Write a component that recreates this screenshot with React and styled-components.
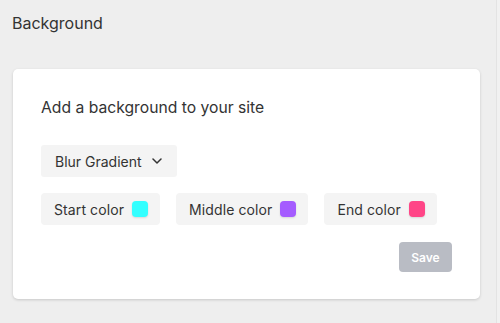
import React from 'react'
import styled, { createGlobalStyle } from 'styled-components'

const GlobalStyle = createGlobalStyle`
  html, body {
    margin: 0;
    padding: 0;
    background: #eeeeee;
    font-family: Inter, 'Liberation Sans', sans-serif;
    color: #333333;
  }
`

const Page = styled.div`
  display: flex;
  width: 500px;
  height: 323px;
  overflow: hidden;
`

const Main = styled.div`
  flex: 1;
  padding: 11px 16px 0 12px;
`

const ScrollTrack = styled.div`
  width: 3px;
  background: #f1f1f1;
  border-left: 1px solid #e3e3e3;
`

const Title = styled.h2`
  margin: 0;
  font-size: 16px;
  line-height: 24px;
  font-weight: 400;
  color: #333333;
`

const Card = styled.div`
  margin: 34px 0 0 1px;
  width: 467px;
  box-sizing: border-box;
  background: #ffffff;
  border-radius: 5px;
  box-shadow: 0 1px 3px rgba(0, 0, 0, 0.16);
  padding: 27px 28px 27px 28px;
  display: flex;
  flex-direction: column;
`

const Heading = styled.p`
  margin: 0;
  font-size: 15.7px;
  line-height: 24px;
  color: #333333;
`

const Select = styled.button`
  margin-top: 25px;
  align-self: flex-start;
  height: 32px;
  padding: 0 15px 0 14px;
  display: flex;
  align-items: center;
  gap: 10px;
  border: none;
  border-radius: 3px;
  background: #f4f4f4;
  font-family: inherit;
  font-size: 14px;
  color: #333333;
`

const ColorRow = styled.div`
  margin-top: 16px;
  display: flex;
  gap: 16px;
`

const Chip = styled.div`
  height: 32px;
  display: flex;
  align-items: center;
  gap: 8px;
  padding: 0 12px 0 13px;
  border-radius: 4px;
  background: #f4f4f4;
  font-size: 14px;
  letter-spacing: 0.1px;
  color: #333333;
`

const Swatch = styled.span`
  width: 16px;
  height: 16px;
  border-radius: 4px;
  background: ${p => p.color};
  box-shadow: 0 1px 2px rgba(0, 0, 0, 0.12);
`

const Footer = styled.div`
  margin-top: 17px;
  display: flex;
  justify-content: flex-end;
`

const SaveButton = styled.button`
  height: 30px;
  width: 53px;
  border: none;
  border-radius: 4px;
  background: #b9bcc4;
  color: #ffffff;
  font-family: inherit;
  font-size: 12px;
  font-weight: 600;
`

const Chevron = () => (
  <svg width="10" height="6" viewBox="0 0 10 6" fill="none">
    <path d="M1 1l4 4 4-4" stroke="#333" strokeWidth="1.5" strokeLinecap="round" strokeLinejoin="round" />
  </svg>
)

const colors = [
  { label: 'Start color', value: '#33ffff' },
  { label: 'Middle color', value: '#a55cff' },
  { label: 'End color', value: '#ff4587' },
]

const App = () => (
  <>
    <GlobalStyle />
    <Page>
      <Main>
        <Title>Background</Title>
        <Card>
          <Heading>Add a background to your site</Heading>
          <Select>
            Blur Gradient
            <Chevron />
          </Select>
          <ColorRow>
            {colors.map(c => (
              <Chip key={c.label}>
                {c.label}
                <Swatch color={c.value} />
              </Chip>
            ))}
          </ColorRow>
          <Footer>
            <SaveButton>Save</SaveButton>
          </Footer>
        </Card>
      </Main>
      <ScrollTrack />
    </Page>
  </>
)

export default App
